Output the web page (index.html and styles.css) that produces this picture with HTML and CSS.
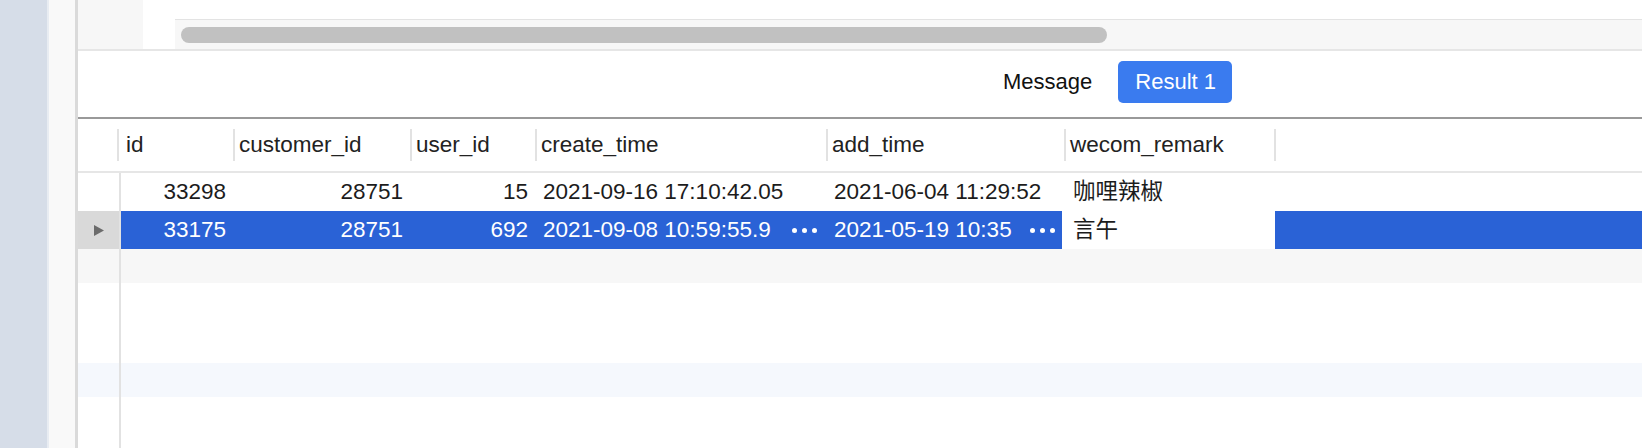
FILE: index.html
```html
<!DOCTYPE html>
<html lang="en">
<head>
<meta charset="utf-8">
<title>Result</title>
<link rel="stylesheet" href="styles.css">
</head>
<body>
<div class="app">
  <div class="rail"></div>
  <div class="side"></div>
  <div class="main">
    <div class="top">
      <div class="top-gray"></div>
      <div class="top-gap"></div>
      <div class="hscroll"><div class="thumb"></div></div>
    </div>
    <div class="tabs">
      <span class="tab">Message</span>
      <span class="tab active">Result 1</span>
    </div>
    <div class="grid">
      <div class="row head">
        <div class="c gut"></div>
        <div class="c h first">id</div>
        <div class="c h">customer_id</div>
        <div class="c h">user_id</div>
        <div class="c h">create_time</div>
        <div class="c h">add_time</div>
        <div class="c h">wecom_remark</div>
        <div class="c h"></div>
      </div>
      <div class="row data">
        <div class="c gut"></div>
        <div class="c num">33298</div>
        <div class="c num">28751</div>
        <div class="c num">15</div>
        <div class="c txt">2021-09-16 17:10:42.05</div>
        <div class="c txt">2021-06-04 11:29:52</div>
        <div class="c txt cjk">咖哩辣椒</div>
        <div class="c"></div>
      </div>
      <div class="row data sel">
        <div class="c gut"><svg class="arrow" width="10" height="11" viewBox="0 0 10 11"><polygon points="0,0 10,5.5 0,11" fill="#6b6b6b"/></svg></div>
        <div class="c num">33175</div>
        <div class="c num">28751</div>
        <div class="c num">692</div>
        <div class="c txt clip"><span class="val">2021-09-08 10:59:55.9</span><span class="more"><i></i><i></i><i></i></span></div>
        <div class="c txt clip"><span class="val">2021-05-19 10:35</span><span class="more"><i></i><i></i><i></i></span></div>
        <div class="c txt cjk editing">言午</div>
        <div class="c"></div>
      </div>
      <div class="stripe gray"><div class="gut"></div></div>
      <div class="stripe blank"><div class="gut"></div></div>
      <div class="stripe blue"><div class="gut"></div></div>
      <div class="stripe rest"><div class="gut"></div></div>
    </div>
  </div>
</div>
</body>
</html>
```

FILE: styles.css
```css
* { box-sizing: border-box; }
html, body { margin: 0; padding: 0; }
body {
  width: 1642px;
  height: 448px;
  overflow: hidden;
  background: #fff;
  font-family: "Liberation Sans", Arial, "Noto Sans CJK SC", sans-serif;
  font-size: 22px;
  color: #1c1c1c;
}
.app { display: flex; height: 448px; }
.rail {
  width: 49px;
  background: #d6dde8;
  border-right: 2px solid #e8ecf2;
}
.side {
  width: 29px;
  background: #f9f9f9;
  border-right: 3px solid #dadada;
}
.main { flex: 1; display: flex; flex-direction: column; min-width: 0; }

/* top scroller area */
.top {
  display: flex;
  height: 51px;
  border-bottom: 2px solid #e6e6e6;
}
.top-gray { width: 65px; background: #f7f7f7; }
.top-gap { width: 32px; }
.hscroll {
  flex: 1;
  margin-top: 19px;
  border-top: 1px solid #e3e3e3;
  background: #f7f7f7;
  padding: 7px 0 0 6px;
}
.thumb {
  width: 926px;
  height: 16px;
  border-radius: 8px;
  background: #c1c1c1;
}

/* tabs */
.tabs {
  display: flex;
  align-items: flex-start;
  justify-content: flex-end;
  height: 68px;
  padding: 10px 410px 0 0;
  border-bottom: 2px solid #999;
}
.tab {
  height: 42px;
  line-height: 42px;
  color: #111;
}
.tab + .tab { margin-left: 26px; }
.tab.active {
  background: #3a7bef;
  color: #fff;
  border-radius: 5px;
  padding: 0 16px 0 17px;
}

/* grid */
.grid { flex: 1; display: flex; flex-direction: column; font-size: 22.5px; }
.row {
  display: grid;
  grid-template-columns: 43px 113px 177px 125px 291px 238px 210px 1fr;
}
.head {
  height: 54px;
  border-bottom: 2px solid #e6e6e6;
  color: #222;
}
.c { white-space: nowrap; overflow: hidden; }
.h {
  position: relative;
  overflow: visible;
  padding-left: 5px;
  line-height: 52px;
}
.h::before {
  content: "";
  position: absolute;
  left: -1px;
  top: 10px;
  width: 2px;
  height: 32px;
  background: #e2e2e2;
}
.h.first::before { left: -4px; }
.data { height: 38px; line-height: 38px; }
.data .gut { border-right: 2px solid #e2e2e2; }
.num { text-align: right; padding-right: 8px; }
.txt { padding-left: 7px; }
.cjk { padding-left: 8px; }

.sel { background: #2a62d6; color: #fff; }
.sel .gut {
  background: #d9d9d9;
  display: flex;
  align-items: center;
  padding-left: 16px;
}
.sel .editing {
  background: #fff;
  color: #1c1c1c;
  box-shadow: -3px 0 0 #fff;
  overflow: visible;
}
.clip { display: flex; align-items: center; padding-right: 10px; }
.clip .val { flex: 1; overflow: hidden; min-width: 0; }
.more { display: flex; gap: 5px; margin-left: 7px; }
.more i { width: 5px; height: 5px; border-radius: 50%; background: #fff; }

.stripe { display: flex; }
.stripe .gut { width: 43px; border-right: 2px solid #e2e2e2; }
.stripe.gray { height: 34px; background: #f7f7f7; }
.stripe.blank { height: 80px; }
.stripe.blue { height: 34px; background: #f5f8fd; }
.stripe.rest { flex: 1; }
```
